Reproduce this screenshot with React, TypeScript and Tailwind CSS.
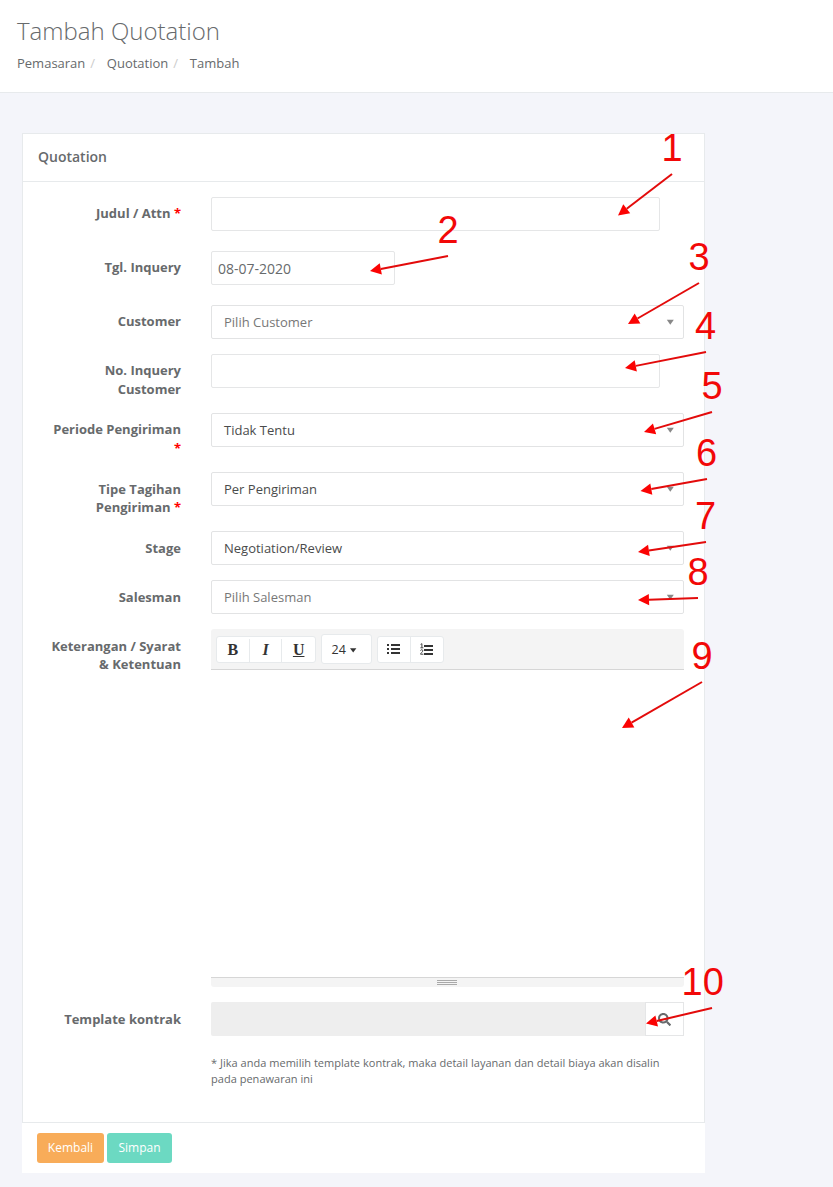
import type { ReactNode } from 'react';
import { FaSearch } from 'react-icons/fa';

const ARROWS: { n: string; x: number; y: number; from: [number, number]; to: [number, number] }[] = [
  { n: '1', x: 661.5, y: 161, from: [672, 174], to: [618, 215.5] },
  { n: '2', x: 437.5, y: 243, from: [448, 256], to: [370, 271] },
  { n: '3', x: 688.5, y: 270, from: [699, 283], to: [628, 324] },
  { n: '4', x: 695, y: 339, from: [706, 352], to: [625, 368] },
  { n: '5', x: 701.5, y: 399, from: [712, 412], to: [644, 432] },
  { n: '6', x: 696, y: 466, from: [707, 479], to: [640.5, 491] },
  { n: '7', x: 695, y: 529, from: [706, 542], to: [638, 552] },
  { n: '8', x: 687.5, y: 585, from: [698, 598], to: [638, 600] },
  { n: '9', x: 691.5, y: 669, from: [702, 682], to: [622, 728] },
  { n: '10', x: 681.5, y: 995, from: [712, 1008], to: [646, 1023.5] },
];

function Annotations() {
  return (
    <svg className="pointer-events-none absolute top-0 left-0" width="833" height="1187" viewBox="0 0 833 1187">
      {ARROWS.map(({ n, x, y, from, to }) => {
        const len = Math.hypot(to[0] - from[0], to[1] - from[1]);
        const ux = (to[0] - from[0]) / len;
        const uy = (to[1] - from[1]) / len;
        const bx = to[0] - ux * 11;
        const by = to[1] - uy * 11;
        return (
          <g key={n}>
            <line x1={from[0]} y1={from[1]} x2={bx} y2={by} stroke="#e30b0b" strokeWidth="2" />
            <polygon
              points={`${to[0]},${to[1]} ${bx - uy * 5.7},${by + ux * 5.7} ${bx + uy * 5.7},${by - ux * 5.7}`}
              fill="#fb0303"
            />
            <text x={x} y={y} fill="#f20808" className="font-['Liberation_Sans',sans-serif] text-[38px]">
              {n}
            </text>
          </g>
        );
      })}
    </svg>
  );
}

type RowProps = { label: string; required?: boolean; height: string; labelPad?: string; children: ReactNode };

function Row({ label, required, height, labelPad = 'pt-[7px]', children }: RowProps) {
  return (
    <div className={`flex gap-[30px] ${height}`}>
      <label className={`w-[134px] shrink-0 text-right font-bold leading-[18.5px] ${labelPad}`}>
        {label}
        {required && <span className="text-[#f00]"> *</span>}
      </label>
      <div className="w-[473px]">{children}</div>
    </div>
  );
}

function Input({ width, value }: { width: string; value?: string }) {
  return (
    <div className={`flex h-[34px] items-center rounded-[2px] border border-[#e5e6e7] px-1.5 pt-[2px] text-[14px] ${width}`}>
      {value}
    </div>
  );
}

function Select({ value, placeholder }: { value: string; placeholder?: boolean }) {
  return (
    <div className="flex h-[34px] items-center justify-between rounded-[2px] border border-[#e2e3e4] pr-[9px] pl-3">
      <span className={placeholder ? 'text-[#777]' : 'text-[#4a4b4c]'}>{value}</span>
      <svg width="8" height="6" viewBox="0 0 8 6">
        <path d="M0.8 0.8h7L4.3 5.8z" fill="#888" />
      </svg>
    </div>
  );
}

function Editor() {
  const cell = 'flex w-[33px] items-center justify-center';
  return (
    <div className="flex h-[358px] flex-col">
      <div className="flex h-[41px] shrink-0 items-center gap-[5px] rounded-t-[3px] border-b border-[#d6d6d6] bg-[#f4f4f4] px-[5px] text-[#333]">
        <div className="flex h-[27px] w-[100px] divide-x divide-[#e7eaec] rounded-[3px] border border-[#e7eaec] bg-white pt-[2px] font-['Liberation_Serif',serif] text-[16px] font-bold">
          <span className={cell}>B</span>
          <span className={`${cell} italic`}>I</span>
          <span className={`${cell} underline decoration-1 underline-offset-1`}>U</span>
        </div>
        <div className="flex h-[30px] w-[51px] items-center gap-1 rounded-[3px] border border-[#e7eaec] bg-white pt-[2px] pl-[9.5px] text-[12.5px]">
          24
          <svg width="7" height="5" viewBox="0 0 7 5">
            <path d="M0 0.3h6.4L3.2 4.6z" fill="#333" />
          </svg>
        </div>
        <div className="flex h-[27px] w-[67px] divide-x divide-[#e7eaec] rounded-[3px] border border-[#e7eaec] bg-white">
          <span className={cell}>
            <svg width="14" height="12" viewBox="0 0 14 12" fill="#333">
              <path d="M0 1h2v2H0zM4 1h9v2H4zM0 5h2v2H0zM4 5h9v2H4zM0 9h2v2H0zM4 9h9v2H4z" />
            </svg>
          </span>
          <span className={cell}>
            <svg width="14" height="12" viewBox="0 0 14 12" fill="#333">
              <path d="M4 2h9v2H4zM4 6h9v2H4zM4 10h9v2H4z" />
              <path
                d="M.6 1.4L1.9.7v4M.4 4.8h3M.5 7.5c.5-1.1 2.5-1 2.3.3C2.7 9 .8 9.8.5 11.2h2.9"
                fill="none"
                stroke="#444"
                strokeWidth="1"
              />
            </svg>
          </span>
        </div>
      </div>
      <div className="grow" />
      <div className="flex h-[10px] shrink-0 flex-col items-center gap-px rounded-b-[3px] border-t border-[#d6d6d6] bg-[#f4f4f4] pt-[2px] pr-[2px]">
        <span className="h-px w-5 bg-[#a9a9a9]" />
        <span className="h-px w-5 bg-[#a9a9a9]" />
        <span className="h-px w-5 bg-[#a9a9a9]" />
      </div>
    </div>
  );
}

export default function App() {
  return (
    <div className="relative h-[1187px] w-[833px] overflow-hidden bg-[#f4f5fa] font-['Open_Sans',sans-serif] text-[13px] leading-[18.57px] text-[#676a6c]">
      <header className="h-[93px] border-b border-[#e7eaec] bg-white pt-[16px] pl-[17px]">
        <h1 className="text-[24px] leading-[30px] font-light">Tambah Quotation</h1>
        <nav className="mt-2 flex">
          <span>Pemasaran</span>
          <span className="w-[21.5px] pl-[5px] text-[#ccc]">/</span>
          <span>Quotation</span>
          <span className="w-[21.5px] pl-[5px] text-[#ccc]">/</span>
          <span>Tambah</span>
        </nav>
      </header>

      <main className="mt-10 ml-[22px] w-[683px]">
        <section className="h-[990px] border border-[#e7eaec] bg-white">
          <h2 className="flex h-12 items-center border-b border-[#e7eaec] pl-[15px] text-[14px] font-semibold">Quotation</h2>
          <div className="pt-[15px] pl-6">
            <Row label="Judul / Attn" required height="h-[54px]"><Input width="w-[449px]" /></Row>
            <Row label="Tgl. Inquery" height="h-[54px]"><Input width="w-[184px]" value="08-07-2020" /></Row>
            <Row label="Customer" height="h-[49px]"><Select value="Pilih Customer" placeholder /></Row>
            <Row label="No. Inquery Customer" height="h-[59px]"><Input width="w-[449px]" /></Row>
            <Row label="Periode Pengiriman" required height="h-[59px]"><Select value="Tidak Tentu" /></Row>
            <Row label="Tipe Tagihan Pengiriman" required height="h-[59px]" labelPad="pt-[7.5px]"><Select value="Per Pengiriman" /></Row>
            <Row label="Stage" height="h-[49px]" labelPad="pt-2"><Select value="Negotiation/Review" /></Row>
            <Row label="Salesman" height="h-[49px]" labelPad="pt-2"><Select value="Pilih Salesman" placeholder /></Row>
            <Row label="Keterangan / Syarat & Ketentuan" height="h-[373px]" labelPad="pt-[7.5px]"><Editor /></Row>
            <Row label="Template kontrak" height="h-[100px]" labelPad="pt-2">
              <div className="flex h-[34px]">
                <div className="grow rounded-l-[2px] bg-[#eee]" />
                <div className="flex w-[39px] items-center justify-center border border-[#e5e6e7]">
                  <FaSearch size={13} />
                </div>
              </div>
              <p className="mt-[19px] text-[11px] leading-4 tracking-[0.023px]">
                * Jika anda memilih template kontrak, maka detail layanan dan detail biaya akan disalin
                <br />
                pada penawaran ini
              </p>
            </Row>
          </div>
        </section>
        <footer className="flex h-[50px] gap-[3px] bg-white pt-[10px] pl-[15px] text-[12px] text-white">
          <button className="h-[30px] w-[67px] rounded-[3px] bg-[#f8ac59]">Kembali</button>
          <button className="h-[30px] w-[65px] rounded-[3px] bg-[#6cd9c2]">Simpan</button>
        </footer>
      </main>
      <Annotations />
    </div>
  );
}
